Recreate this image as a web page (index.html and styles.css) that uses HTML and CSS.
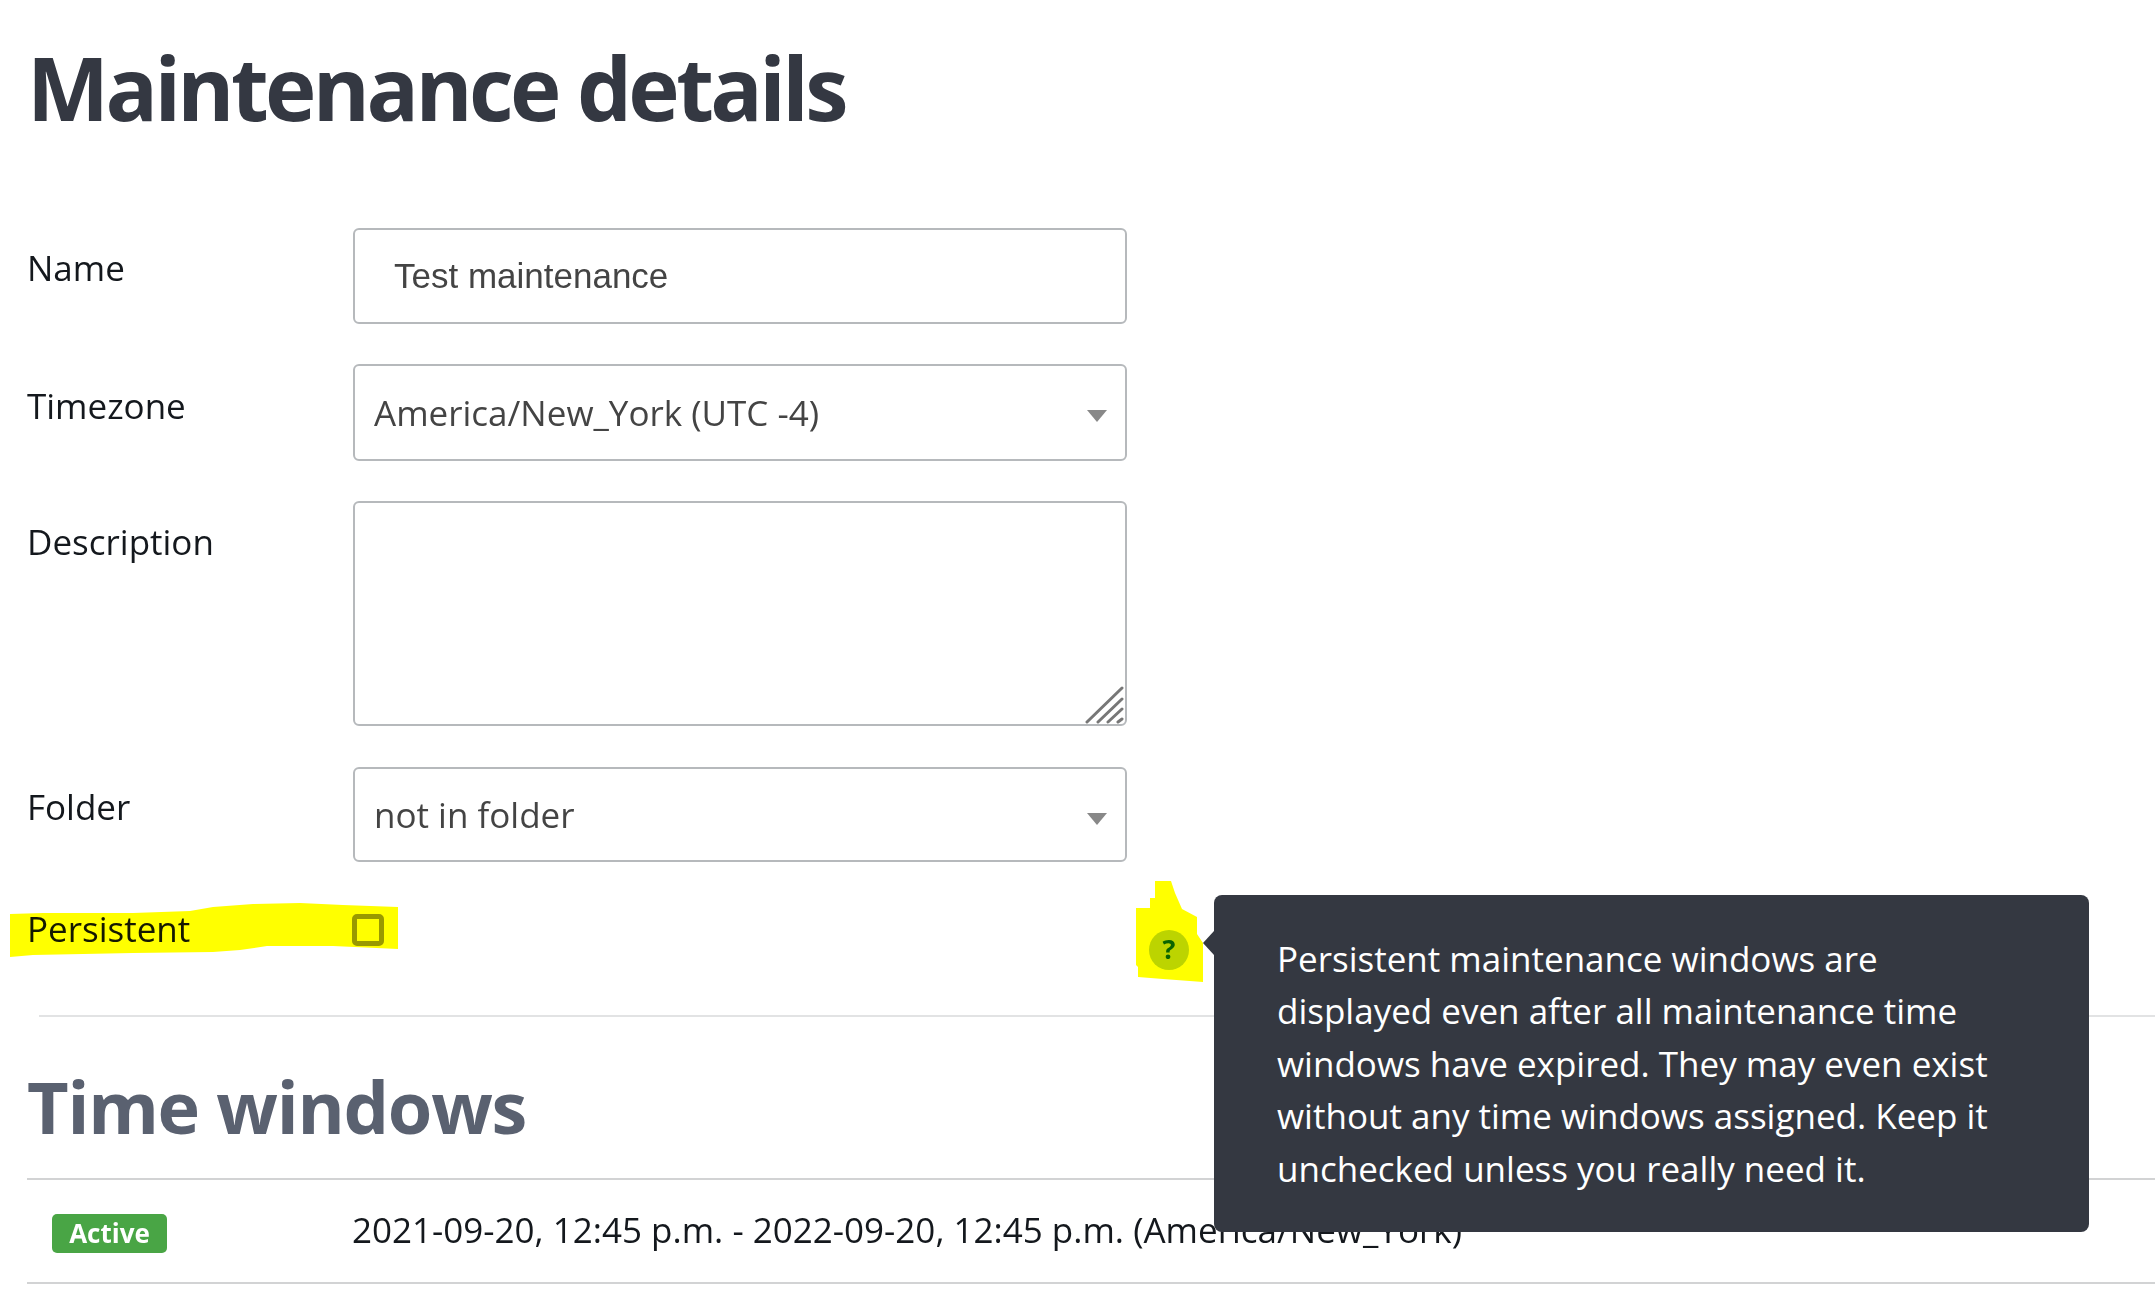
FILE: index.html
```html
<!DOCTYPE html>
<html lang="en">
<head>
<meta charset="utf-8">
<title>Maintenance details</title>
<link rel="stylesheet" href="styles.css">
</head>
<body>
<main class="page">
  <h1 class="title">Maintenance details</h1>
  <form class="form">
    <div class="row">
      <label class="label">Name</label>
      <div class="field field-input">Test maintenance</div>
    </div>
    <div class="row">
      <label class="label label-low">Timezone</label>
      <div class="field field-select field-tall">America/New_York (UTC -4)<span class="caret"></span></div>
    </div>
    <div class="row">
      <label class="label label-mid">Description</label>
      <div class="field field-area">
        <svg class="grip" viewBox="0 0 40 38" width="40" height="38" aria-hidden="true">
          <path d="M3 36 38 2M14 36 38 13M24 36 38 23M34 36 38 33" fill="none" stroke="#777" stroke-width="3" stroke-linecap="round"/>
        </svg>
      </div>
    </div>
    <div class="row row-folder">
      <label class="label">Folder</label>
      <div class="field field-select field-short">not in folder<span class="caret"></span></div>
    </div>
    <div class="row row-check">
      <label class="label label-check">Persistent</label>
      <div class="check-cell"><span class="checkbox"></span></div>
      <div class="help">?
        <div class="tooltip">Persistent maintenance windows are<br>displayed even after all maintenance time<br>windows have expired. They may even exist<br>without any time windows assigned. Keep it<br>unchecked unless you really need it.</div>
      </div>
    </div>
  </form>
  <hr class="divider">
  <h2 class="subtitle">Time windows</h2>
  <div class="window">
    <div class="badge-cell"><span class="badge">Active</span></div>
    <div class="window-text">2021-09-20, 12:45 p.m. - 2022-09-20, 12:45 p.m. (America/New_York)</div>
  </div>
</main>
<svg class="marker" viewBox="0 0 2155 1292" width="2155" height="1292" aria-hidden="true">
  <path fill="#ffff00" d="M10 914 43 913 133 913 190 911 213 907 253 904 300 903 343 905 398 907 398 949 333 946 267 946 240 950 213 952 133 953 33 955 10 957Z"/>
  <path fill="#ffff00" d="M1155 881 1171 881 1175 893 1182 909 1197 917 1197 934 1203 943 1203 982 1163 979 1138 977 1138 967 1136 965 1136 908 1150 908 1150 898 1155 898Z"/>
</svg>
</body>
</html>
```
FILE: styles.css
```css
* { box-sizing: border-box; }
html, body { margin: 0; background: #fff; }
body { width: 2155px; height: 1292px; overflow: hidden; font-family: "Open Sans", "Liberation Sans", sans-serif; color: #14181d; }
.page { display: flex; flex-direction: column; }
.title { margin: 0; padding: 32px 0 0 27px; height: 228px; font-size: 87px; line-height: 110px; font-weight: 700; color: #343842; letter-spacing: -3.6px; }
.form { display: flex; flex-direction: column; gap: 40px; padding-left: 27px; }
.row { display: flex; align-items: flex-start; }
.label { width: 326px; padding-top: 17px; font-size: 35px; line-height: 46px; flex: none; }
.label-low { padding-top: 19px; }
.label-mid { padding-top: 18px; }
.field { position: relative; width: 774px; height: 96px; border: 2px solid #b6b9bc; border-radius: 6px; display: flex; align-items: center; font-size: 35px; line-height: 46px; color: #444; background: #fff; }
.field-input { padding-left: 39px; font-family: "Liberation Sans", Arial, sans-serif; }
.field-select { padding-left: 19px; }
.field-tall { height: 97px; }
.field-short { height: 95px; }
.field-area { height: 225px; }
.caret { position: absolute; right: 18px; top: 44px; width: 0; height: 0; border-left: 10px solid transparent; border-right: 10px solid transparent; border-top: 12px solid #888; }
.grip { position: absolute; right: 1px; bottom: 0; }
.row-folder { margin-top: 1px; }
.row-check { margin-top: 4px; height: 64px; }
.label-check { padding-top: 0; }
.check-cell { width: 796px; flex: none; padding-top: 8px; }
.checkbox { display: block; width: 32px; height: 32px; margin-left: -1px; border: 5px solid #999; border-radius: 5px; background: #fff; }
.help { position: relative; flex: none; width: 40px; height: 40px; margin-top: 24px; border-radius: 50%; background: #bcd400; color: #0a6400; font-size: 27px; line-height: 38px; font-weight: 700; text-align: center; }
.tooltip { position: absolute; z-index: 3; left: 65px; top: -35px; width: 875px; height: 337px; padding: 37.7px 0 0 63px; background: #343841; border-radius: 8px; color: #fff; font-size: 35px; line-height: 52.5px; font-weight: 400; text-align: left; white-space: nowrap; }
.tooltip::before { content: ""; position: absolute; left: -11px; top: 36px; width: 0; height: 0; border-top: 12px solid transparent; border-bottom: 12px solid transparent; border-right: 11px solid #343841; }
.divider { margin: 45px 0 0 39px; border: 0; border-top: 2px solid #e2e3e4; height: 0; }
.subtitle { margin: 0; padding: 44px 0 0 27px; height: 161px; font-size: 72px; line-height: 90px; font-weight: 700; letter-spacing: -1.25px; color: #5a6170; }
.window { display: flex; align-items: flex-start; margin-left: 27px; height: 106px; border-top: 2px solid #d2d3d4; border-bottom: 2px solid #d2d3d4; }
.badge-cell { width: 326px; flex: none; padding: 34px 0 0 25px; }
.badge { display: block; width: 115px; height: 39px; border-radius: 5px; background: #49a545; color: #fff; font-size: 26px; line-height: 39px; font-weight: 700; text-align: center; }
.window-text { margin-left: -1px; padding-top: 27px; font-size: 35px; line-height: 46px; white-space: nowrap; color: #14181d; }
.marker { position: absolute; left: 0; top: 0; z-index: 2; mix-blend-mode: multiply; pointer-events: none; }
```
